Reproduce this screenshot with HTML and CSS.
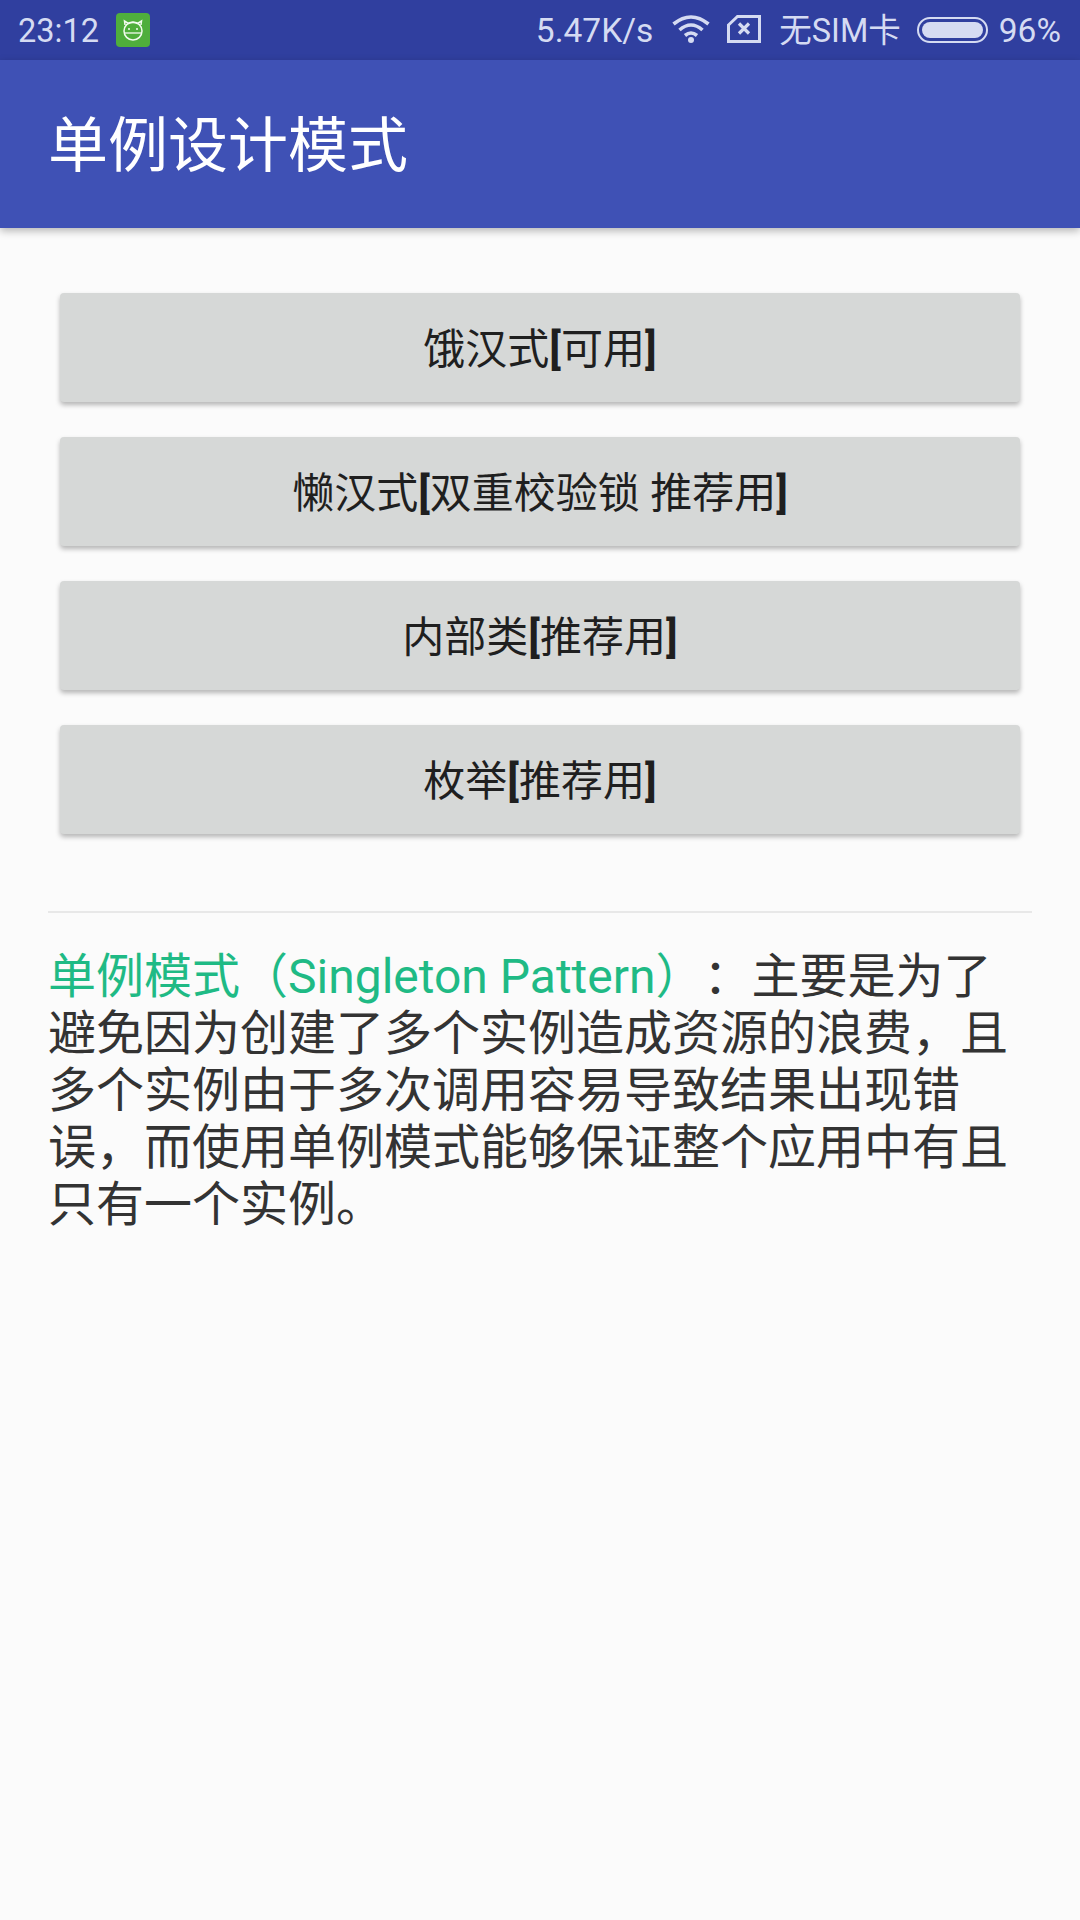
FILE: index.html
```html
<!DOCTYPE html>
<html lang="zh-CN">
<head>
<meta charset="utf-8">
<title>单例设计模式</title>
<link rel="stylesheet" href="styles.css">
</head>
<body>
<div class="status">
  <div class="status-left">
    <span class="time">23:12</span>
    <svg class="app-icon" viewBox="0 0 34 34"><rect width="34" height="34" rx="4" fill="#4fae3c"/><g fill="none" stroke="#f2fbef" stroke-width="1.5"><path d="M9 12 8.500 8 12.500 10.500Q17 8.500 21.500 10.500L25.500 8 25 12"/><circle cx="17" cy="18" r="9"/><path d="M8 20H26" stroke-width="1.300"/></g><circle cx="13" cy="16" r="1" fill="#f2fbef"/><circle cx="21" cy="16" r="1" fill="#f2fbef"/></svg>
  </div>
  <div class="status-right">
    <span class="speed">5.47K/s</span>
    <svg class="wifi" viewBox="0 0 38 28"><g fill="none" stroke="#d5dbf2" stroke-width="3.600"><path d="M1.500 9Q19-5 36.500 9"/><path d="M7.500 15Q19 5 30.500 15"/><path d="M13 20.500Q19 15.500 25 20.500"/></g><circle cx="19" cy="25" r="3" fill="#d5dbf2"/></svg>
    <svg class="sim" viewBox="0 0 34 28"><path d="M1.500 10 10.500 1.500H32.500V26.500H1.500Z" fill="none" stroke="#d5dbf2" stroke-width="3"/><path d="M12 8.500 22 18.500M22 8.500 12 18.500" stroke="#d5dbf2" stroke-width="3.200"/></svg>
    <span class="carrier">无SIM卡</span>
    <span class="battery"><span class="battery-fill"></span></span>
    <span class="percent">96%</span>
  </div>
</div>
<header class="toolbar"><h1 class="title">单例设计模式</h1></header>
<main class="content">
  <div class="buttons">
    <button class="btn">饿汉式<span class="bracket">[</span>可用<span class="bracket">]</span></button>
    <button class="btn">懒汉式<span class="bracket">[</span>双重校验锁 推荐用<span class="bracket">]</span></button>
    <button class="btn">内部类<span class="bracket">[</span>推荐用<span class="bracket">]</span></button>
    <button class="btn">枚举<span class="bracket">[</span>推荐用<span class="bracket">]</span></button>
  </div>
  <hr class="divider">
  <p class="desc"><span class="accent">单例模式（Singleton Pattern）</span><span class="colon">：</span>主要是为了避免因为创建了多个实例造成资源的浪费，且多个实例由于多次调用容易导致结果出现错误，而使用单例模式能够保证整个应用中有且只有一个实例。</p>
</main>
</body>
</html>
```
FILE: styles.css
```css
* { box-sizing: border-box; }
html, body { margin: 0; padding: 0; }
body {
  width: 1080px;
  height: 1920px;
  overflow: hidden;
  background: #fbfbfb;
  font-family: "Roboto", "Noto Sans CJK SC", sans-serif;
}
.status {
  height: 60px;
  background: #303f9f;
  color: #d5dbf2;
  font-size: 33.500px;
  line-height: 40px;
  display: flex;
  justify-content: space-between;
  align-items: center;
  padding: 1px 19px 0 18px;
}
.status-left, .status-right { display: flex; align-items: center; }
.time { font-size: 32.500px; }
.app-icon { width: 34px; height: 34px; margin-left: 17px; margin-top: -1px; }
.speed { margin-right: 19px; }
.wifi { width: 38px; height: 28px; margin-right: 17px; margin-top: -3px; }
.sim { width: 34px; height: 28px; margin-right: 18px; margin-top: -3px; }
.carrier { margin-right: 16px; font-size: 32.500px; }
.battery {
  width: 71px;
  height: 26px;
  border: 2px solid #d5dbf2;
  border-radius: 13px;
  padding: 3px;
  margin-right: 11px;
  margin-top: -2px;
  display: flex;
}
.battery-fill { flex: 1; background: #d5dbf2; border-radius: 8px; }
.toolbar {
  height: 168px;
  background: #3f51b5;
  display: flex;
  align-items: center;
  padding: 0 0 8px 48px;
  box-shadow: 0 3px 8px rgba(0,0,0,.28);
  position: relative;
}
.title {
  margin: 0;
  color: #fff;
  font-size: 60px;
  font-weight: 400;
}
.content { padding: 65px 48px 0; }
.buttons { display: flex; flex-direction: column; gap: 35px; padding: 0 12px; }
.btn {
  height: 109px;
  border: 0;
  border-radius: 4px;
  background: #d6d8d7;
  color: #1f1f1f;
  font-family: inherit;
  font-size: 42px;
  padding: 0 0 4px;
  box-shadow: 0 3px 5px rgba(0,0,0,.28);
}
.bracket { font-weight: 700; }
.divider {
  height: 2px;
  margin: 77px 0 0;
  border: 0;
  background: #e8e8e8;
}
.desc {
  margin: 31px 0 0;
  font-size: 48px;
  line-height: 57px;
  color: #333;
  text-spacing-trim: space-all;
}
.accent { color: #1fba85; }
.colon { font-family: "Noto Sans CJK TC", sans-serif; }
```
